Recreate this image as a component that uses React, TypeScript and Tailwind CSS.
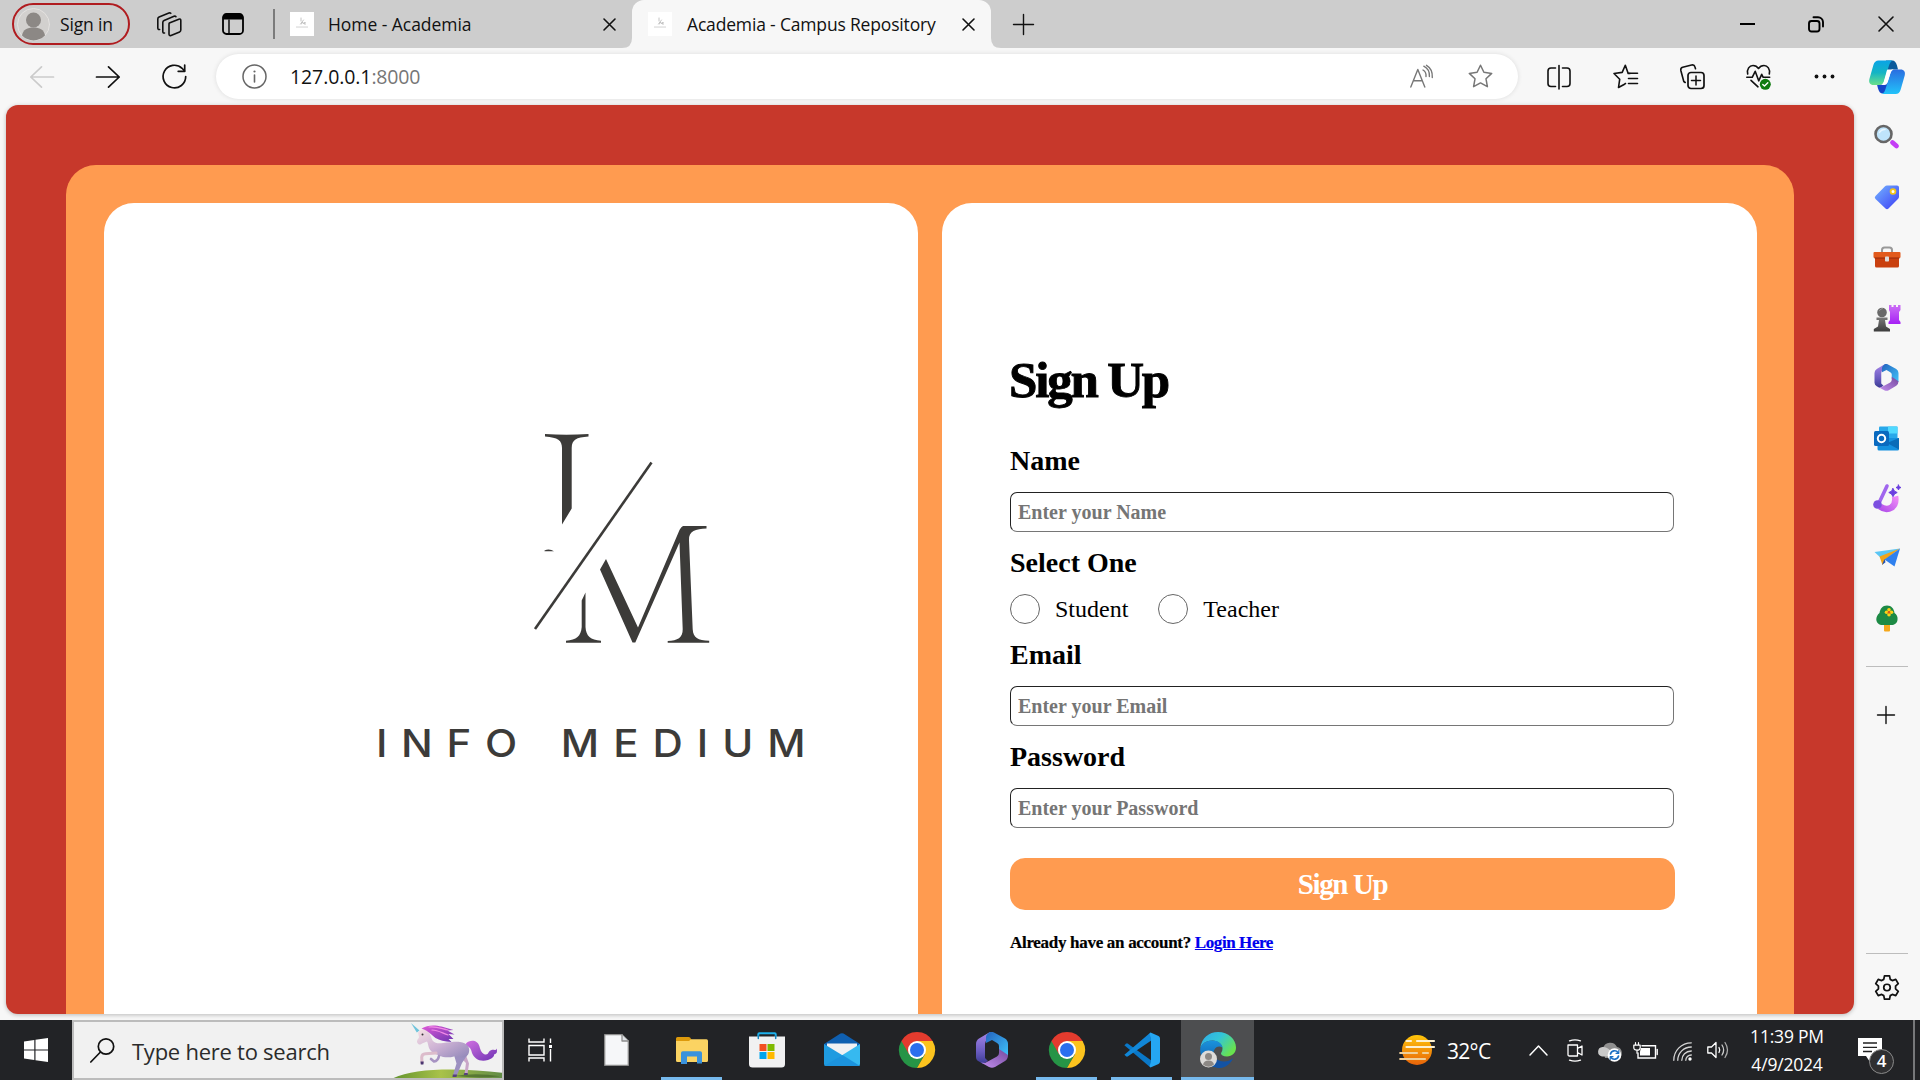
import React from "react";

type IconProps = { w: number; h: number; children: React.ReactNode; className?: string };

/* Line and colour icons share one wrapper; the viewBox is the icon's pixel size. */
function Icon({ w, h, children, className = "" }: IconProps) {
  return (
    <svg
      width={w}
      height={h}
      viewBox={`0 0 ${w} ${h}`}
      fill="none"
      stroke="none"
      strokeLinecap="round"
      strokeLinejoin="round"
      className={`block shrink-0 overflow-visible ${className}`}
    >
      {children}
    </svg>
  );
}

/* ---------- Browser icons ---------- */

const Avatar = () => (
  <Icon w={33} h={33}>
    <circle cx="16.5" cy="16.5" r="16" fill="#d2d0ce" stroke="#e4e2e0" />
    <circle cx="16.5" cy="12" r="7.5" fill="#8c8885" />
    <path d="M5 27.5c1-6 5.500-8 11.500-8s10.500 2 11.500 8a16 16 0 0 1-23 0z" fill="#8c8885" />
  </Icon>
);

const Workspaces = () => (
  <Icon w={25} h={25}>
    <g stroke="#111" strokeWidth="1.6">
      <path d="M12.300 11l9.500-3.800q2-.7 2 1.400v9.500q0 1.300-1.200 1.800l-8.600 3.500q-2 .7-2-1.400v-9.300q0-1.200.3-1.700z" />
      <path d="M7.500 21c-1 .2-1.700-.3-1.700-1.500V10.500q0-1.500 1.300-2.100L17 4.300q1.200-.4 1.900.3" />
      <path d="M2.600 17.500c-1 .2-1.800-.3-1.800-1.500V7q0-1.500 1.300-2.100l9.800-3.900q1.200-.4 1.900.3" />
    </g>
  </Icon>
);

const TabActions = () => (
  <Icon w={22} h={22}>
    <rect x="1" y="1" width="20" height="20" rx="3.500" stroke="#000" strokeWidth="1.800" />
    <path d="M1 6.500V4a3 3 0 0 1 3-3h14a3 3 0 0 1 3 3v2.500z" fill="#000" />
    <path d="M7 7v14" stroke="#000" strokeWidth="1.400" />
  </Icon>
);

const Favicon = () => (
  <Icon w={24} h={24}>
    <rect width="24" height="24" fill="#fff" />
    <path d="M11 6v3M13.500 8l-3 4M11.500 12l1-2 1.500 2 1-2v2.500" stroke="#b5b5b5" strokeWidth=".8" />
    <path d="M6.500 15h12" stroke="#cfcfcf" strokeWidth="1.200" strokeDasharray="1 1" />
  </Icon>
);

const Cross = ({ size }: { size: number }) => (
  <Icon w={size} h={size}>
    <path d={`M1 1L${size - 1} ${size - 1}M${size - 1} 1L1 ${size - 1}`} stroke="#111" strokeWidth="1.600" />
  </Icon>
);

const Plus = ({ size }: { size: number }) => (
  <Icon w={size} h={size}>
    <path d={`M${size / 2} 0.500V${size - 0.5}M0.500 ${size / 2}H${size - 0.5}`} stroke="#111" strokeWidth="1.400" />
  </Icon>
);

const BackArrow = ({ flip }: { flip?: boolean }) => (
  <Icon w={24} h={22} className={flip ? "-scale-x-100" : ""}>
    <path d="M23.500 11H.8M11.500.8L.8 11l10.700 10.200" stroke={flip ? "#111" : "#cbcbcb"} strokeWidth="1.700" />
  </Icon>
);

const Reload = () => (
  <Icon w={25} h={25}>
    <path d="M23.700 12.500a11.300 11.300 0 1 1-3.600-8.200L22.500 7" stroke="#111" strokeWidth="1.700" />
    <path d="M22.700 1v6.300h-6.500" stroke="#111" strokeWidth="1.700" />
  </Icon>
);

const Info = () => (
  <Icon w={25} h={25}>
    <circle cx="12.500" cy="12.500" r="11.500" stroke="#666" strokeWidth="1.500" />
    <path d="M12.500 11v7" stroke="#666" strokeWidth="1.600" />
    <circle cx="12.500" cy="7.500" r="1.100" fill="#666" />
  </Icon>
);

const ReadAloud = () => (
  <Icon w={23} h={23}>
    <g stroke="#777" strokeWidth="1.400">
      <path d="M.8 22L7.800 4.500l7 17.500M3.400 15.800h8.900" />
      <path d="M13 5q3.500 2 3 6.500M13.800 1.200q6 3 5.600 10.300M16.500.3Q22.800 4 22.300 12.500" />
    </g>
  </Icon>
);

const Star = () => (
  <Icon w={25} h={25}>
    <path
      d="M12.500 1.200l3.400 7.100 7.800 1.100-5.700 5.400 1.400 7.900-6.900-3.800-6.900 3.800 1.400-7.900L1.300 9.400l7.800-1.100z"
      stroke="#777"
      strokeWidth="1.500"
    />
  </Icon>
);

const SplitScreen = () => (
  <Icon w={24} h={24}>
    <path
      d="M8.500 3H4a3 3 0 0 0-3 3v12.500a3 3 0 0 0 3 3h4.500M15.500 3H20a3 3 0 0 1 3 3v12.500a3 3 0 0 1-3 3h-4.500M12 .5v23.500"
      stroke="#111"
      strokeWidth="1.600"
    />
  </Icon>
);

const Favorites = () => (
  <Icon w={25} h={25}>
    <path d="M17 9.500h-1.800L12.300 1.200 9.200 8.400 1 9.500l5.700 5.800-1.200 8.200 6-3.300 1-.7" stroke="#111" strokeWidth="1.600" />
    <path d="M15.500 9.300h9M15.500 14.500h9M15.500 19.500h9" stroke="#111" strokeWidth="1.600" />
  </Icon>
);

const Collections = () => (
  <Icon w={25} h={25}>
    <rect x="8" y="8.500" width="16" height="16" rx="3" stroke="#111" strokeWidth="1.700" />
    <path d="M16 12v9M11.500 16.500h9" stroke="#111" strokeWidth="1.500" />
    <path d="M5.200 18.500L3.800 17.500.9 6.700C.5 5 1.200 3.700 2.700 3.300L11.600 1c1.700-.4 2.900.3 3.300 1.800l.6 2" stroke="#111" strokeWidth="1.600" />
  </Icon>
);

const Essentials = () => (
  <Icon w={25} h={26}>
    <g stroke="#111" strokeWidth="1.600">
      <path d="M1.700 10C.6 5 3.500 1.500 7 1.500c2.500 0 4.300 1.200 5.500 3 1.200-1.800 3-3 5.500-3C21.500 1.500 24.400 5 23.300 10" />
      <path d="M.8 13.300h5.400l3-6 3.500 9.500 3-6.500 1.500 3h6.500M5 16.300l7 6.500" />
    </g>
    <circle cx="19.300" cy="20.300" r="5.500" fill="#107c10" />
    <path d="M16.800 20.500l1.700 1.500 3.300-3.300" stroke="#fff" strokeWidth="1.400" />
  </Icon>
);

const Dots = () => (
  <Icon w={21} h={5}>
    <circle cx="2.500" cy="2.500" r="1.900" fill="#111" />
    <circle cx="10.500" cy="2.500" r="1.900" fill="#111" />
    <circle cx="18.500" cy="2.500" r="1.900" fill="#111" />
  </Icon>
);

const Copilot = () => (
  <Icon w={36} h={34}>
    <defs>
      <linearGradient id="cpA" x1="0" y1="0" x2="0" y2="1">
        <stop offset="0" stopColor="#0aa3e6" />
        <stop offset=".5" stopColor="#14b5c4" />
        <stop offset="1" stopColor="#6be08a" />
      </linearGradient>
      <linearGradient id="cpB" x1="0" y1="0" x2="0" y2="1">
        <stop offset="0" stopColor="#2a6de0" />
        <stop offset="1" stopColor="#22c3fa" />
      </linearGradient>
    </defs>
    <path d="M17 .5h6c3 0 4 2 5 5l1 4h-6l-8 4z" fill="#0a5a9c" />
    <path d="M19 33.500h-5c-3 0-4-2-5-5l-1-4h6l7-3z" fill="#1546c8" />
    <path d="M9.500.5h14c-2 1-2.800 3-3.500 5l-5 16c-.8 2.400-2.500 3.500-5 3.500H4.500C1 25-.5 22.500.4 19l4-14C5.300 2 7 .5 9.500.5z" fill="url(#cpA)" />
    <path d="M26 9.500h5.500c3.600 0 5.100 2.500 4.200 6l-4 14c-.9 3-2.500 4.500-5 4.500H13c2-1 2.800-3 3.500-5l5-16c.8-2.400 2-3.500 4.500-3.500z" fill="url(#cpB)" />
    <path d="M18.500 9.500H24.500c-1.800.7-2.500 2-3 3.500l-3 9.500c-.6 1.700-1.500 2.500-3 2.500h-3.500c1.600-.7 2.200-1.700 2.700-3l2.500-9c.4-2 .7-2.700 1.300-3.500z" fill="#fff" />
  </Icon>
);

/* ---------- Sidebar icons ---------- */

const SideSearch = () => (
  <Icon w={26} h={26}>
    <path d="M18.500 18.500l4 3.500" stroke="#c43df5" strokeWidth="4.800" />
    <circle cx="9.500" cy="10" r="8" fill="#bfe4fb" stroke="#666" strokeWidth="2.600" />
    <path d="M5.500 8.500q2-3.500 5.500-3" stroke="#e8f6ff" strokeWidth="1.500" />
  </Icon>
);

const SideTag = () => (
  <Icon w={26} h={26}>
    <defs>
      <linearGradient id="tg" x1="0" y1="0" x2="1" y2="1">
        <stop stopColor="#74b5ff" />
        <stop offset="1" stopColor="#3c3cf5" />
      </linearGradient>
    </defs>
    <path d="M13 1.500h10q2 0 2 2v9q0 1.300-.8 2.200l-9.700 9.800q-1.500 1.300-3 0l-10-9.500q-1.500-1.500 0-3l9.300-9.500q.9-1 2.200-1z" fill="url(#tg)" />
    <circle cx="19" cy="7.500" r="2.400" fill="#fff" stroke="#f5c518" strokeWidth="1.800" />
  </Icon>
);

const SideToolbox = () => (
  <Icon w={28} h={22}>
    <path d="M9 7V4a2.500 2.500 0 0 1 2.500-2.500h5A2.500 2.500 0 0 1 19 4v3" stroke="#999" strokeWidth="2" />
    <rect x="2" y="8" width="24" height="13.500" rx="1.500" fill="#c9400f" />
    <rect x=".5" y="6" width="27" height="6" rx="1" fill="#e25a1c" />
    <path d="M2 12h24" stroke="#96290a" strokeWidth="1.200" />
    <rect x="12" y="10.500" width="4" height="5" rx=".8" fill="#ddd" />
  </Icon>
);

const SideChess = () => (
  <Icon w={28} h={28}>
    <defs>
      <linearGradient id="rk" x1="0" y1="0" x2="0" y2="1">
        <stop stopColor="#cc70f5" />
        <stop offset="1" stopColor="#a620f5" />
      </linearGradient>
      <linearGradient id="pw" x1="0" y1="0" x2="0" y2="1">
        <stop stopColor="#7a7a7a" />
        <stop offset="1" stopColor="#3c3c3c" />
      </linearGradient>
    </defs>
    <path d="M16 1h2.500v2h2V1H23v2h2V1h2.500v5L26 8v8l1.500 2v2h-12v-2L17 16V8l-1-2z" fill="url(#rk)" />
    <circle cx="9" cy="8.500" r="4.800" fill="#6a6a6a" />
    <path d="M3.500 13.500h11v2.500h-2.500l1 6.500 4 2.500v2.500H.8V25L5 22.500 6 16H3.500z" fill="url(#pw)" />
    <path d="M6.500 6.500q1-2 3-2" stroke="#9a9a9a" />
  </Icon>
);

const M365 = ({ w, h, hole }: { w: number; h: number; hole: string }) => (
  <svg width={w} height={h} viewBox="0 0 32 36" className="block shrink-0">
    <defs>
      <linearGradient id="mA" x1="0" y1="0" x2="0" y2="1">
        <stop stopColor="#a885e8" />
        <stop offset=".6" stopColor="#6a5cc0" />
        <stop offset="1" stopColor="#3a3a92" />
      </linearGradient>
      <linearGradient id="mB" x1="0" y1="0" x2="1" y2="1">
        <stop stopColor="#2463be" />
        <stop offset="1" stopColor="#3fc3fa" />
      </linearGradient>
      <linearGradient id="mC" x1="0" y1="1" x2="1" y2="0">
        <stop stopColor="#c490f0" />
        <stop offset="1" stopColor="#73489c" />
      </linearGradient>
    </defs>
    <path d="M14 0l-11 6.500Q0 8.500 0 12v13q0 3 3 4.500l4 2.500 5-3-3-3V12q0-3 2.500-4.500z" fill="url(#mA)" />
    <path d="M14 0q2-.6 4 .5l11 6Q32 8.500 32 12v12l-9-4v-6q0-2-2-3l-5-3-6 3V5q0-2.500 4-5z" fill="url(#mB)" />
    <path d="M32 23q0 4-3 6l-10 6q-3 1.500-6 0l-8-4.500 4 .5 12-6.500q2-1.200 2-3.500v-4z" fill="url(#mC)" />
    <path d="M16 12l5 3v6.500l-5 4-5.500-4V15z" fill={hole} />
  </svg>
);

const SideOutlook = () => (
  <Icon w={25} h={25}>
    <rect x="5" y=".5" width="18.500" height="15" rx="1" fill="#28a8ea" />
    <path d="M14 .5h9.500v7H14z" fill="#50d9ff" />
    <path d="M3.500 12L25 12v11q0 1.500-1.500 1.500H5q-1.500 0-1.500-1.500z" fill="#1490df" />
    <path d="M25 12v11.500L13 17z" fill="#0a6cb8" />
    <rect x="0" y="5" width="15" height="15" rx="1.500" fill="#0a6abf" />
    <circle cx="7.500" cy="12.500" r="3.700" stroke="#fff" strokeWidth="2" />
  </Icon>
);

const SideDesigner = () => (
  <Icon w={28} h={29}>
    <defs>
      <linearGradient id="ds" x1="0" y1="1" x2="1" y2="0">
        <stop stopColor="#b250ea" />
        <stop offset="1" stopColor="#ee8af6" />
      </linearGradient>
    </defs>
    <path d="M22 12.500Q23.500 20 18.500 23.500Q13 27 7 22.500" stroke="url(#ds)" strokeWidth="6.500" strokeLinecap="butt" />
    <path d="M14 2L6 19" stroke="#a066ee" strokeWidth="3.600" />
    <circle cx="4.500" cy="20.500" r="4.300" fill="#7c4fe0" />
    <path d="M20 4.500l1.500 2.700 2.700 1.300-2.700 1.500-1.500 2.700-1.500-2.700-2.700-1.500 2.700-1.300z" fill="#6b3fe0" stroke="#6b3fe0" />
    <path d="M25.500 1l.7 1.800 1.800.7-1.800.8-.7 1.700-.8-1.700-1.700-.8 1.700-.7z" fill="#6b3fe0" stroke="#6b3fe0" />
  </Icon>
);

const SidePlane = () => (
  <Icon w={26} h={20}>
    <path d="M26 .5L.5 4 8 11z" fill="#5ac6f5" />
    <path d="M26 .5L5.500 8.500l3 8.500 3.500-6z" fill="#f0a41a" />
    <path d="M8 17l3.500-2.800L10.500 11z" fill="#1c50b8" />
    <path d="M26 .5L10.500 11.500l10 7z" fill="#2f80ee" />
  </Icon>
);

const SideTree = () => (
  <Icon w={22} h={27}>
    <rect x="8" y="17" width="6" height="9.500" rx="1" fill="#f5a81c" />
    <path d="M11 .5c4.500 0 7 3.500 7.500 7.500 2.300 1.500 3.500 4 3 7-.5 3.500-3 5-6 5h-9C3 20 .5 18 .3 14.500.2 12 1.500 9.500 3.500 8 4 4 6.500.5 11 .5z" fill="#1d8a45" />
    <circle cx="13" cy="4.700" r="1.800" fill="#fdd017" />
    <circle cx="13" cy="9.700" r="1.800" fill="#fdd017" />
    <circle cx="10.500" cy="7.200" r="1.800" fill="#fdd017" />
    <circle cx="15.500" cy="7.200" r="1.800" fill="#fdd017" />
    <circle cx="13" cy="7.200" r="1.300" fill="#e0571a" />
  </Icon>
);

const Gear = () => (
  <svg width="26" height="27" viewBox="0 0 24 24" fill="none" stroke="#111" strokeWidth="1.600" strokeLinejoin="round" className="block">
    <path d="M9.700 1.200h4.600l.7 3.300 1.900 1.100 3.200-1.100 2.300 4-2.500 2.300v2.400l2.500 2.300-2.300 4-3.200-1.100-1.900 1.100-.7 3.300H9.700L9 19.500l-1.900-1.100-3.200 1.100-2.300-4 2.500-2.300v-2.400L1.600 8.500l2.300-4 3.200 1.100L9 4.500z" />
    <circle cx="12" cy="12" r="3" />
  </svg>
);

/* ---------- Taskbar icons ---------- */

const Windows = () => (
  <Icon w={24} h={24}>
    <path d="M0 3.400L10.300 2v9.500H0zM11.500 1.800L24 0v11.500H11.500zM0 12.600h10.300V22L0 20.600zM11.500 12.600H24V24l-12.500-1.800z" fill="#fff" />
  </Icon>
);

const SearchGlass = () => (
  <Icon w={25} h={25}>
    <circle cx="16" cy="8.500" r="7.700" stroke="#111" strokeWidth="1.700" />
    <path d="M10.500 14L.8 24" stroke="#111" strokeWidth="1.700" />
  </Icon>
);

const Unicorn = () => (
  <Icon w={112} h={58}>
    <defs>
      <linearGradient id="hill" x1="0" y1="0" x2="1" y2="0">
        <stop stopColor="#5d8f2a" />
        <stop offset=".45" stopColor="#a9c24a" />
        <stop offset="1" stopColor="#5f8a45" />
      </linearGradient>
      <linearGradient id="body" x1="0" y1="0" x2="1" y2="1">
        <stop stopColor="#f6e0e4" />
        <stop offset=".5" stopColor="#cdb2d4" />
        <stop offset="1" stopColor="#8f86b8" />
      </linearGradient>
      <linearGradient id="mane" x1="0" y1="0" x2="1" y2="1">
        <stop stopColor="#e05ad8" />
        <stop offset="1" stopColor="#6a35b0" />
      </linearGradient>
      <linearGradient id="tail" x1="0" y1="0" x2="1" y2="1">
        <stop stopColor="#d070e0" />
        <stop offset="1" stopColor="#6f32b4" />
      </linearGradient>
    </defs>
    <path d="M-3 59C14 45 70 45.500 112 51v8z" fill="url(#hill)" />
    <path d="M62 54q22-3.500 46 .2-20 2.600-46-.2z" fill="#4a6a2c" opacity=".75" />
    <path d="M19 1l8.500 7.500-2.700 2z" fill="#6fc4dc" />
    <path d="M74 21.500c4-4.500 12-3.500 13.500 3 1 4 2.500 7.500 6 8 3.500.3 2.500-3.500 6-4.500 2.500-.6 4.500 1 5-1.500 1.300 3.500 0 5.500-2.500 6 .5 2.500-3 4.500-6 5.500-8 2.500-14-1.500-16-7-1-4-2-6.500-6-7z" fill="url(#tail)" />
    <path d="M69 36l5 5-1.500 11h3l1.500-10.500-3-8z" fill="#c9a6c8" />
    <path d="M62 33l2.500 8.500-3.500 11.500h4l5-12 6-9z" fill="#9c90c0" />
    <path d="M60.800 52.500h4.300l-.6 2.500h-4zM72.300 51h3.500v2h-4z" fill="#55407a" />
    <path d="M26 10.500c2-3 6-4 9-2 4 3 4 8 6 10.500 2 2.500 6 2.500 10 2 6-.5 12-1.500 17-1 7 .8 10 5 9 10-.7 4-4.500 6-8 5.500-3-.5-5-1.500-7-1-5 1.500-11 1-15-1-4-1.800-8-3-10-7.500-1-3-1-5-2-6.500l-5 2c-1.500 2-4.500 1-5-1.500 0-3 2-3.500 2-5z" fill="url(#body)" />
    <path d="M44 31l-10.500.8q-3.500.2-3.800 3.500l.3 5.500" stroke="#dcbccb" strokeWidth="3" />
    <path d="M47 34q-1 5-5 5.500l-3-2.500" stroke="#a793c2" strokeWidth="2.600" />
    <path d="M28.500 39.500h3.200l-.3 3h-2.600z" fill="#4a3670" />
    <path d="M29.500 6.500c6-4 14-3.500 20-2l12 3.500-6 .5 7 4-6-.5 5 5h-5l3 3c-7-.5-12-1.500-16-4-4-3-7-7-14-9.500z" fill="url(#mane)" />
    <path d="M37 5c8-1 13 2 19 3M40 8c6 0 10 3 16 5" stroke="#f08ae6" strokeWidth="1.200" />
    <circle cx="30.500" cy="12.500" r="1" fill="#333" />
  </Icon>
);

const TaskView = () => (
  <Icon w={24} h={24}>
    <path d="M1 .5v3.500h15V.5M1 23.500V20h15v3.500M1 7.500h15v9.500H1zM22.500.5V5M22.500 11v12.500" stroke="#fff" strokeWidth="1.400" strokeLinecap="butt" strokeLinejoin="miter" />
    <rect x="21" y="7" width="3" height="3" fill="#fff" />
  </Icon>
);

const FilePage = () => (
  <Icon w={25} h={32}>
    <path d="M.7.700H18L24.300 7v24.300H.7z" fill="#f6f7f9" stroke="#8d8d8d" strokeWidth="1.300" />
    <path d="M18 .7V7h6.300" fill="#dfe2e6" stroke="#8d8d8d" strokeWidth="1.300" />
  </Icon>
);

const Explorer = () => (
  <Icon w={32} h={27}>
    <path d="M0 1.500Q0 0 1.500 0h11q2 0 2.500 2l1 3H0z" fill="#dd9a0c" />
    <path d="M0 4h13l2-1.800h15.500Q32 2.200 32 4v19.500q0 1.500-1.500 1.500h-29Q0 25 0 23.500z" fill="#fbd362" />
    <path d="M5 27V16q0-1.800 1.800-1.800h17.400q1.800 0 1.800 1.800v10.500h-5V19.500H11V27z" fill="#3a92dc" />
  </Icon>
);

const Store = () => (
  <Icon w={36} h={36}>
    <path d="M9.300 10V2.200q0-1 1-1h15.400q1 0 1 1V10" stroke="#1eb1ec" strokeWidth="2" />
    <path d="M0 4.500h36V32q0 3.500-3.500 3.500h-29Q0 35.500 0 32z" fill="#f1f1f2" />
    <path d="M9.300 4v2.500M26.700 4v2.500" stroke="#1583bb" strokeWidth="1.500" />
    <path d="M10.500 12h7v7h-7z" fill="#f25022" />
    <path d="M18.500 12h7v7h-7z" fill="#7fba00" />
    <path d="M10.500 20h7v7h-7z" fill="#00a4ef" />
    <path d="M18.500 20h7v7h-7z" fill="#ffb900" />
  </Icon>
);

const Mail = () => (
  <Icon w={36} h={34}>
    <path d="M0 11L16.500.6q1.500-.8 3 0L36 11v4H0z" fill="#0f5fb0" />
    <path d="M3 10.500h30V24H3z" fill="#f1f1f3" />
    <path d="M0 11l36 22H2q-2 0-2-2z" fill="#1f9be0" />
    <path d="M36 11v20q0 2-2 2H3L18.500 22z" fill="#36b9f0" />
    <path d="M0 33h36L18.500 22z" fill="#1c93dd" />
  </Icon>
);

const Chrome = () => (
  <Icon w={36} h={36}>
    <path d="M2.400 9A18 18 0 0 1 33.600 9L18 18z" fill="#e33b2e" />
    <path d="M2.400 9A18 18 0 0 0 18 36l7.800-13.500L18 18z" fill="#269446" />
    <path d="M33.600 9A18 18 0 0 1 18 36l7.800-13.500L18 9z" fill="#fcc31e" />
    <path d="M2.400 9l7.800 13.500L18 18V9h15.600z" fill="#e33b2e" />
    <circle cx="18" cy="18" r="9" fill="#fff" />
    <circle cx="18" cy="18" r="7" fill="#2a6fee" />
  </Icon>
);

const VSCode = () => (
  <Icon w={36} h={36}>
    <path d="M.4 13.200L2 11.700q1-.7 2 0L28 29l-1.500 6.500z" fill="#0a78c8" />
    <path d="M.4 22.800L2 24.300q1 .7 2 0L28 8 26.500.5z" fill="#1187d8" />
    <path d="M26.500.5L34.500 4Q36 4.800 36 6.500v23q0 1.700-1.500 2.500l-8 3.500-1-1.500 1.500-4V6l-1.500-4z" fill="#25a6f2" />
  </Icon>
);

const EdgeLogo = () => (
  <Icon w={36} h={36}>
    <defs>
      <linearGradient id="eA" x1="0" y1="0" x2="1" y2=".6">
        <stop stopColor="#2fa9e8" />
        <stop offset=".5" stopColor="#33c5d8" />
        <stop offset="1" stopColor="#69e34e" />
      </linearGradient>
      <linearGradient id="eB" x1="0" y1="0" x2="0" y2="1">
        <stop stopColor="#1b93dc" />
        <stop offset="1" stopColor="#0e56a8" />
      </linearGradient>
    </defs>
    <path d="M.3 16C1.500 6 9 0 18 0c10.500 0 18 7.500 18 15.500 0 5.500-4 9-9 9-4 0-6-1.500-6-3 0-1 1.500-2 1.500-5 0-4-4.500-8-10-8-6 0-10.500 3-12.200 7.500z" fill="url(#eA)" />
    <path d="M.3 16C2 11 7 8.500 12.500 8.500c5.500 0 10 3.500 10 7-5-3-9 1-9 6 0 8 8 12 12 13C13 39-1 30 .3 16z" fill="url(#eB)" />
    <path d="M14 20c-1 6 4 9.500 10 9.500 4 0 7-1.500 9-3.500-2 6-8 10-14.500 10C12 35 9 26 14 20z" fill="#1353a4" />
    <circle cx="8.500" cy="27" r="8.500" fill="#dddbd9" />
    <circle cx="8.500" cy="24.500" r="3.500" fill="#8c8885" />
    <path d="M3 32.500q1-4 5.500-4t5.500 4q-5.500 4.500-11 0z" fill="#8c8885" />
  </Icon>
);

const WeatherSun = () => (
  <Icon w={36} h={30}>
    <defs>
      <linearGradient id="sun" x1="0" y1="0" x2="0" y2="1">
        <stop stopColor="#ffc60a" />
        <stop offset="1" stopColor="#e8630a" />
      </linearGradient>
    </defs>
    <circle cx="18" cy="15" r="15" fill="url(#sun)" />
    <path d="M7.500 6H12M18 6h17M7.500 12H35" stroke="#fdf0d0" strokeWidth="2.200" />
    <path d="M1.200 18H18M24 18h5M1.200 24H26" stroke="#efcf9a" strokeWidth="2.200" />
  </Icon>
);

const ChevronUp = () => (
  <Icon w={19} h={11}>
    <path d="M1 10l8.500-9 8.500 9" stroke="#fff" strokeWidth="1.500" />
  </Icon>
);

const MeetNow = () => (
  <Icon w={16} h={23}>
    <path d="M2.500 1.800q5.500-2 11 0M2.500 21.200q5.500 2 11 0M1 6h9.500v11H2.500Q1 17 1 15.500zM10.500 9.500L15 7v9l-4.500-2.500" stroke="#fff" strokeWidth="1.300" />
  </Icon>
);

const CloudSync = () => (
  <Icon w={25} h={21}>
    <path d="M6 7a7.500 7.500 0 0 1 14-1 6 6 0 0 1 2 11H8z" fill="#8f8f8f" />
    <path d="M5 15.500a4.800 4.800 0 0 1 .5-9.500c4-.5 7 2 10 6v3.500z" fill="#c9c9c9" />
    <circle cx="17.500" cy="14" r="6.800" fill="#fff" />
    <path d="M13.500 13a4.200 4.200 0 0 1 7.500-1.500M21.500 15a4.200 4.200 0 0 1-7.500 1.500" stroke="#1b6fc4" strokeWidth="1.700" />
    <path d="M21.800 9.500v2.800H19M13.200 18.500v-2.800H16" stroke="#1b6fc4" strokeWidth="1.200" />
  </Icon>
);

const Battery = () => (
  <Icon w={25} h={17}>
    <path d="M9 3.700h13.500V16H5V11" stroke="#fff" strokeWidth="1.400" strokeLinejoin="miter" />
    <path d="M24.200 7.500v5" stroke="#fff" strokeWidth="1.400" />
    <path d="M8 6h9v7.500H7V9.500z" fill="#fff" />
    <path d="M2.500.7v2.500M5.500.7v2.500M.8 3.200h6.400v2.500q0 2.500-3.200 2.500T.8 5.700zM4 8.200v3" stroke="#fff" strokeWidth="1.200" />
  </Icon>
);

const Wifi = () => (
  <Icon w={19} h={19}>
    <g stroke="#d5d5d5" strokeWidth="1.300">
      <path d="M.8 18.300C.8 8.500 8.500.8 18.300.8" />
      <path d="M4.800 18.300C4.800 11 10.700 5 18.300 5" />
      <path d="M8.800 18.300c0-5 4-9.300 9.500-9.300" />
      <path d="M12.800 18.300c0-3 2.400-5.300 5.500-5.300" />
    </g>
    <circle cx="17" cy="17" r="1.700" fill="#fff" />
  </Icon>
);

const Volume = () => (
  <Icon w={22} h={18}>
    <g stroke="#fff" strokeWidth="1.300">
      <path d="M.8 6h3.700L9 1.500v15L4.500 12H.8z" />
      <path d="M12 6.500q1.500 2.500 0 5" />
      <path d="M15 4q3.300 5 0 10" stroke="#ccc" />
      <path d="M18 1.500q5 7.500 0 15" stroke="#aaa" />
    </g>
  </Icon>
);

const Notification = () => (
  <Icon w={24} h={25}>
    <path d="M0 0h24v18h-7.500L12 24l-4-6H0z" fill="#fff" />
    <path d="M5 5h14M5 9.300h14M5 13.500h9" stroke="#222" strokeWidth="1.300" strokeLinecap="butt" />
  </Icon>
);

/* ---------- Browser chrome ---------- */

function TabStrip() {
  return (
    <div className="flex h-12 items-center bg-[#cdcdcd] text-[17.5px] leading-[46px] text-[#111]">
      <button className="ml-3 flex h-[42px] w-[118px] items-center rounded-full border-2 border-[#b01c20] pl-[3px]">
        <Avatar />
        <span className="ml-[10px] tracking-[-0.15px] whitespace-nowrap">Sign in</span>
      </button>
      <div className="ml-[27px]"><Workspaces /></div>
      <div className="ml-[40px]"><TabActions /></div>
      <div className="ml-[29px] h-[30px] w-[2px] bg-[#7b7b7b]" />
      <div className="ml-[15px]"><Favicon /></div>
      <span className="ml-[14px] w-[275px] tracking-[-0.05px] whitespace-nowrap">Home - Academia</span>
      <Cross size={13} />
      <div className="relative ml-[16px] flex h-12 w-[359px] items-center rounded-t-[12px] bg-[#f7f7f7]">
        <svg width="10" height="10" viewBox="0 0 10 10" className="absolute bottom-0 -left-[10px]">
          <path d="M10 0v10H0Q10 10 10 0z" fill="#f7f7f7" />
        </svg>
        <svg width="10" height="10" viewBox="0 0 10 10" className="absolute -right-[10px] bottom-0">
          <path d="M0 0v10h10Q0 10 0 0z" fill="#f7f7f7" />
        </svg>
        <div className="ml-4"><Favicon /></div>
        <span className="ml-[15px] w-[275px] tracking-[-0.17px] whitespace-nowrap">Academia - Campus Repository</span>
        <Cross size={13} />
      </div>
      <div className="ml-[22px]"><Plus size={21} /></div>
      <div className="ml-auto flex w-[180px] items-center">
        <div className="h-[2px] w-[15px] bg-black" />
        <div className="ml-[53px]">
          <Icon w={16} h={16}>
            <rect x="1" y="5" width="10.500" height="10.500" rx="2.500" stroke="#000" strokeWidth="1.900" />
            <path d="M5.500 1.200H10A5 5 0 0 1 15 6v4.500" stroke="#000" strokeWidth="1.900" />
          </Icon>
        </div>
        <div className="ml-[54px]"><Cross size={16} /></div>
      </div>
    </div>
  );
}

function Toolbar() {
  return (
    <div className="flex h-[57px] items-center bg-[#f7f7f7]">
      <div className="ml-[30px]"><BackArrow /></div>
      <div className="ml-[42px]"><BackArrow flip /></div>
      <div className="ml-[42px]"><Reload /></div>
      <div className="ml-[29px] flex h-[45px] w-[1302px] items-center rounded-full bg-white shadow-[0_0_5px_rgba(0,0,0,0.11)]">
        <div className="ml-[26px]"><Info /></div>
        <span className="ml-[23px] text-[19.5px] tracking-[-0.1px] text-[#111]">127.0.0.1</span>
        <span className="text-[19.5px] tracking-[-0.15px] text-[#767676]">:8000</span>
        <div className="ml-auto"><ReadAloud /></div>
        <div className="mr-[25px] ml-[35px]"><Star /></div>
      </div>
      <div className="ml-[29px]"><SplitScreen /></div>
      <div className="ml-[42px]"><Favorites /></div>
      <div className="ml-[42px]"><Collections /></div>
      <div className="ml-[41px]"><Essentials /></div>
      <div className="ml-[43px]"><Dots /></div>
      <div className="ml-[34px]"><Copilot /></div>
    </div>
  );
}

function Sidebar() {
  const items = [
    <SideSearch />, <SideTag />, <SideToolbox />, <SideChess />, <M365 w={25} h={27} hole="#f7f7f7" />,
    <SideOutlook />, <SideDesigner />, <SidePlane />, <SideTree />,
  ];
  return (
    <div className="flex w-[66px] flex-col items-center">
      <div className="flex flex-col items-center pt-[2px] pr-px">
        {items.map((item, i) => (
          <div key={i} className="flex h-[60.2px] items-center">{item}</div>
        ))}
      </div>
      <div className="mt-[17px] h-px w-[42px] bg-[#bdbdbd]" />
      <div className="mt-[39px] pr-[2px]"><Plus size={18} /></div>
      <div className="mt-auto h-px w-[42px] bg-[#bdbdbd]" />
      <div className="mt-[20px] mb-[19px] pr-px"><Gear /></div>
    </div>
  );
}

/* ---------- Page ---------- */

function Brand() {
  return (
    <div className="flex w-[814px] flex-col rounded-t-[30px] bg-white">
      <svg width="180" height="212" viewBox="0 0 180 212" className="mt-[230px] ml-[430px] block overflow-visible" fill="#3c3b39">
        <path d="M11 1Q32 2.400 54.500 1V3.500C42 4.500 38 6.500 37.700 15V75.500L28 91.500V15C28 7.500 24 4.500 11 3.500z" />
        <path d="M10.500 117.500q5-2.200 9.500.8h-9.500z" />
        <path d="M1 196L117.500 29.500" stroke="#3c3b39" strokeWidth="2.600" />
        <path d="M47.700 167.500l3.800-8V194c.5 9 5 13.200 15.500 13.700v2H32v-2c10.500-.5 15-4.700 15.700-13.700z" />
        <path d="M72 126l-6 10.500L98.500 209.500h2.800L145.500 109.500 148.700 196c.2 9-5 11.500-15 12v1.700h41.500V207.700c-11.500-.5-16-3-16.500-11.500L155 107c-.3-9 6.500-11 17.500-11.500V93h-23.500q-2 1-3.500 4L104 194.500z" />
      </svg>
      <div className="mt-[75px] ml-[272px] flex origin-left scale-x-[1.12] text-[37.5px] leading-[48px] font-medium whitespace-nowrap text-[#3c3b39]">
        <span className="w-[165px] font-['Inter',sans-serif] tracking-[12.2px]">INFO</span>
        <span className="font-['Inter',sans-serif] tracking-[12.5px]">MEDIUM</span>
      </div>
    </div>
  );
}

function Field({ label, placeholder, type }: { label: string; placeholder: string; type: string }) {
  return (
    <label className="block">
      <span className="block text-[28px] leading-8 font-bold">{label}</span>
      <input
        type={type}
        placeholder={placeholder}
        className="mt-[15px] block h-10 w-[664px] rounded-[7px] border border-t-[#222] border-r-[#767676] border-b-[#767676] border-l-[#222] bg-white px-[7px] text-[20px] font-bold placeholder:text-[#757575] placeholder:opacity-100"
      />
    </label>
  );
}

function Choice({ label }: { label: string }) {
  return (
    <label className="flex items-center">
      <input type="radio" name="role" className="size-[30px] appearance-none rounded-full border-[1.5px] border-[#666] bg-white" />
      <span className="ml-[15px] text-[24px] leading-[30px]">{label}</span>
    </label>
  );
}

function SignUpForm() {
  return (
    <form className="flex w-[815px] flex-col rounded-t-[30px] bg-white pt-[147px] pl-[68px] font-['Liberation_Serif',serif] text-black">
      <h1 className="-ml-px text-[51px] leading-[60px] font-bold tracking-[-2.2px] [-webkit-text-stroke:0.9px_black]">Sign Up</h1>
      <div className="mt-[35px]">
        <Field label="Name" placeholder="Enter your Name" type="text" />
      </div>
      <div className="mt-[15px] text-[28px] leading-8 font-bold">Select One</div>
      <div className="mt-[15px] flex gap-[30px]">
        <Choice label="Student" />
        <Choice label="Teacher" />
      </div>
      <div className="mt-[15px]">
        <Field label="Email" placeholder="Enter your Email" type="email" />
      </div>
      <div className="mt-[15px]">
        <Field label="Password" placeholder="Enter your Password" type="password" />
      </div>
      <button type="button" className="mt-[30px] h-[52px] w-[665px] rounded-[15px] bg-[#ff9b50] text-[29px] leading-[52px] font-bold tracking-[-1.4px] text-white">
        Sign Up
      </button>
      <p className="mt-[21px] text-[17px] leading-6 font-bold tracking-[-0.3px] [-webkit-text-stroke:0.2px]">
        Already have an account? <a href="#" className="tracking-[-0.42px] text-[#0000ee] underline">Login Here</a>
      </p>
    </form>
  );
}

function Page() {
  return (
    <main className="ml-[6px] h-[909px] w-[1848px] overflow-hidden rounded-[12px] bg-[#c7382b] px-[60px] pt-[60px] shadow-[0_1px_4px_rgba(0,0,0,0.25)]">
      <div className="flex h-[1000px] gap-6 rounded-[30px] bg-[#ff9b50] pt-[38px] pl-[38px]">
        <Brand />
        <SignUpForm />
      </div>
    </main>
  );
}

/* ---------- Taskbar ---------- */

function TaskButton({ children, open }: { children: React.ReactNode; open?: boolean }) {
  return (
    <div className="relative flex h-[60px] w-[75px] items-center justify-center">
      {children}
      {open && <div className="absolute bottom-0 left-[7px] h-[3px] w-[61px] bg-[#76b9ed]" />}
    </div>
  );
}

function Taskbar() {
  return (
    <div className="flex h-[60px] items-center bg-[#222326] text-white">
      <div className="flex w-[72px] justify-center"><Windows /></div>
      <div className="flex h-[60px] w-[432px] items-center overflow-hidden border-2 border-[#bcbcbc] bg-[#f1f1f1]">
        <div className="ml-4"><SearchGlass /></div>
        <span className="ml-[17px] pt-[3px] text-[22px] tracking-[-0.25px] whitespace-nowrap text-[#2b2b2b]">Type here to search</span>
        <div className="mt-[2px] -mr-[2px] ml-auto"><Unicorn /></div>
      </div>
      <div className="-ml-[2px] flex w-[77px]"><TaskButton><TaskView /></TaskButton></div>
      <div className="flex">
        <TaskButton><FilePage /></TaskButton>
        <TaskButton open><Explorer /></TaskButton>
        <TaskButton><Store /></TaskButton>
        <TaskButton><Mail /></TaskButton>
        <TaskButton><Chrome /></TaskButton>
        <TaskButton><M365 w={32} h={36} hole="#222326" /></TaskButton>
        <TaskButton open><Chrome /></TaskButton>
        <TaskButton open><VSCode /></TaskButton>
        <div className="relative ml-[2px] flex h-[60px] w-[73px] items-center justify-center bg-[#4d4e50]">
          <EdgeLogo />
          <div className="absolute bottom-0 left-0 h-[3px] w-full bg-[#76b9ed]" />
        </div>
      </div>
      <div className="ml-[145px]"><WeatherSun /></div>
      <span className="ml-[12px] w-[82px] pt-[3px] text-[21px] tracking-[-0.7px] whitespace-nowrap">32°C</span>
      <ChevronUp />
      <div className="ml-[19px]"><MeetNow /></div>
      <div className="ml-[14px] pt-[3px]"><CloudSync /></div>
      <div className="ml-[11px]"><Battery /></div>
      <div className="ml-[15px] pt-[2px]"><Wifi /></div>
      <div className="ml-[15px]"><Volume /></div>
      <div className="ml-[20px] w-[76px] text-center text-[17.5px] leading-[28px] tracking-[-0.2px] whitespace-nowrap">
        <div>11:39 PM</div>
        <div>4/9/2024</div>
      </div>
      <div className="relative ml-[33px]">
        <Notification />
        <div className="absolute top-[11px] left-[11px] flex size-[25px] items-center justify-center rounded-full border border-[#8a8a8a] bg-[#2f2f31] text-[17px] font-semibold">4</div>
      </div>
      <div className="mr-[5px] ml-auto h-[60px] w-[2px] bg-[#77787a]" />
    </div>
  );
}

export default function App() {
  return (
    <div className="h-[1080px] w-[1920px] overflow-hidden bg-[#f7f7f7] font-['Open_Sans','Noto_Sans',sans-serif]">
      <TabStrip />
      <Toolbar />
      <div className="flex h-[915px]">
        <Page />
        <Sidebar />
      </div>
      <Taskbar />
    </div>
  );
}
